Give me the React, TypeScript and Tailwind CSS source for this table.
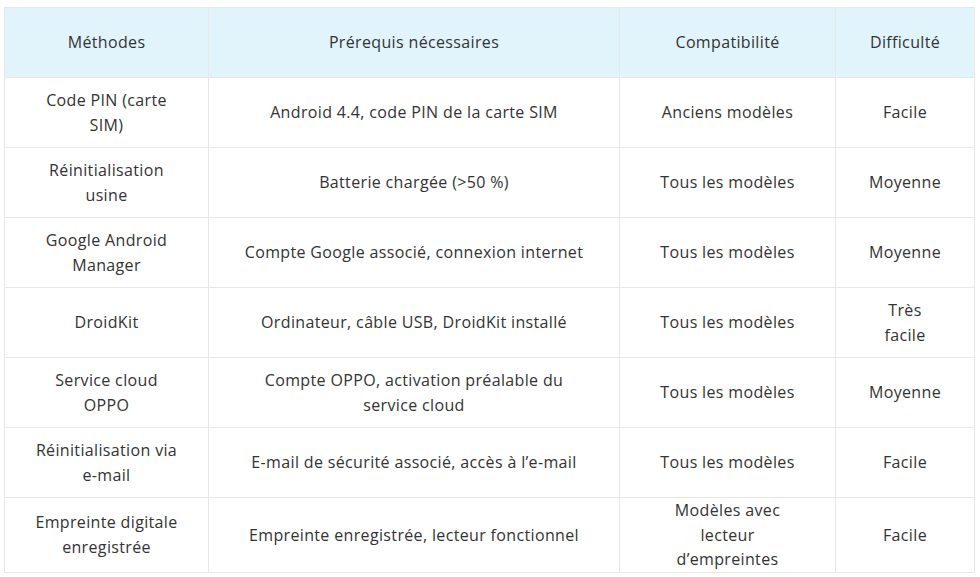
import React from 'react';

const rows = [
  ['Code PIN (carte SIM)', 'Android 4.4, code PIN de la carte SIM', 'Anciens modèles', 'Facile'],
  ['Réinitialisation usine', 'Batterie chargée (>50 %)', 'Tous les modèles', 'Moyenne'],
  ['Google Android Manager', 'Compte Google associé, connexion internet', 'Tous les modèles', 'Moyenne'],
  ['DroidKit', 'Ordinateur, câble USB, DroidKit installé', 'Tous les modèles', 'Très facile'],
  ['Service cloud OPPO', 'Compte OPPO, activation préalable du service cloud', 'Tous les modèles', 'Moyenne'],
  ['Réinitialisation via e-mail', 'E-mail de sécurité associé, accès à l’e-mail', 'Tous les modèles', 'Facile'],
  ['Empreinte digitale enregistrée', 'Empreinte enregistrée, lecteur fonctionnel', 'Modèles avec lecteur d’empreintes', 'Facile'],
];

const headers = ['Méthodes', 'Prérequis nécessaires', 'Compatibilité', 'Difficulté'];

// first column has a bit less side padding so two-word labels fit like the original
const pad = ['px-[27px]', 'px-[31px]', 'px-[31px]', 'px-[31px]'];

export default function App() {
  return (
    <div className="w-[980px] h-[577px] bg-white pt-[7px] pl-[4px] font-['Open_Sans',sans-serif] text-[16px] tracking-[0.35px] leading-[24.5px] text-[#333]">
      <table className="w-[970px] table-fixed border-collapse">
        <colgroup>
          <col className="w-[204px]" />
          <col className="w-[411px]" />
          <col className="w-[216px]" />
          <col className="w-[139px]" />
        </colgroup>
        <thead>
          <tr className="bg-[#e1f4fc]">
            {headers.map((h, i) => (
              <th key={h} className={`h-[70px] border border-[#e8e8e8] ${pad[i]} py-0 text-center font-normal`}>
                {h}
              </th>
            ))}
          </tr>
        </thead>
        <tbody>
          {rows.map(r => (
            <tr key={r[0]}>
              {r.map((c, i) => (
                <td key={i} className={`h-[70px] border border-[#e8e8e8] ${pad[i]} py-0 text-center align-middle`}>
                  {c}
                </td>
              ))}
            </tr>
          ))}
        </tbody>
      </table>
    </div>
  );
}
